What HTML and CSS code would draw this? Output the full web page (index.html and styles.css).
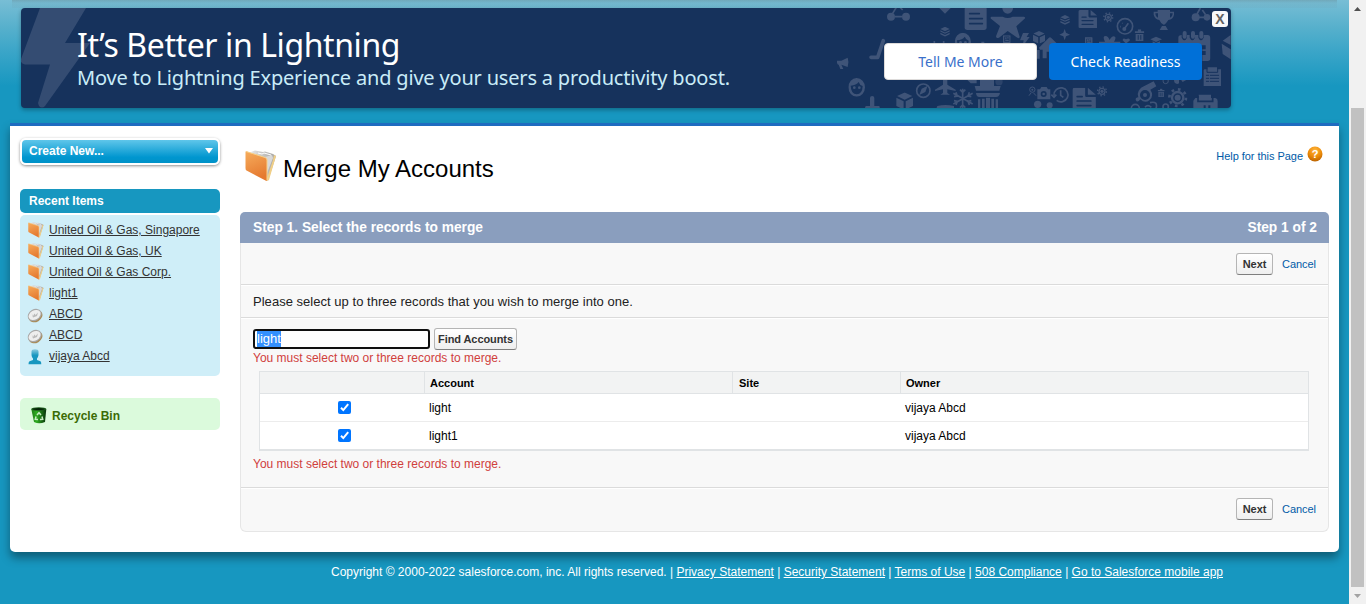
FILE: index.html
```html
<!DOCTYPE html>
<html lang="en">
<head>
<meta charset="utf-8">
<title>Merge My Accounts</title>
<link rel="stylesheet" href="styles.css">
</head>
<body>
<svg class="defs" width="0" height="0">
  <defs>
    <linearGradient id="orange" x1="0" y1="0" x2="0.3" y2="1"><stop offset="0" stop-color="#f6ac5c"/><stop offset="1" stop-color="#e57a30"/></linearGradient>
    <linearGradient id="paper" x1="0" y1="0" x2="1" y2="0"><stop offset="0" stop-color="#e4e4e4"/><stop offset="1" stop-color="#a5a4a1"/></linearGradient>
    <radialGradient id="help" cx="0.5" cy="0.25" r="0.8"><stop offset="0" stop-color="#ffb53c"/><stop offset="0.55" stop-color="#ec8b08"/><stop offset="1" stop-color="#b35c00"/></radialGradient>
    <linearGradient id="person" x1="0" y1="0" x2="0" y2="1"><stop offset="0" stop-color="#8ccbe0"/><stop offset="0.4" stop-color="#1797c0"/></linearGradient>
    <linearGradient id="bin" x1="0" y1="0" x2="1" y2="0"><stop offset="0" stop-color="#1f7a18"/><stop offset="0.35" stop-color="#2fae22"/><stop offset="1" stop-color="#07300a"/></linearGradient>
    <symbol id="folder" viewBox="0 0 32 32">
      <path d="M6 2 L10 0.500 L18 2 L20 1.500 L28 4 L31 6 L23 31 L20 28 Z" fill="url(#paper)"/>
      <path d="M20 7 L27 5 L28 8 L22 23 Z" fill="#d8d8d8"/>
      <path d="M29 5 L31 6 L24 30 L21 31 L28 10 Z" fill="#f1cf86"/>
      <path d="M13 3 L17 4 L19 3 L26 5" fill="none" stroke="#fff" stroke-width="1"/>
      <path d="M0.500 2 Q0.500 1 2 1.500 L20 7.500 Q22 8 22 10 L22 30 Q22 31.500 20.500 30.600 L1.500 20.500 Q0.500 20 0.500 18 Z" fill="url(#orange)"/>
      <path d="M1 1.500 L20 7.500 Q22 8 22 10 L22 30.500" fill="none" stroke="#f8d188" stroke-width="1"/>
    </symbol>
    <symbol id="coin" viewBox="0 0 16 16">
      <ellipse cx="8.500" cy="9.200" rx="7.300" ry="5.700" transform="rotate(-30 8.500 9.200)" fill="#a98b58"/>
      <ellipse cx="7.700" cy="8" rx="7.300" ry="5.700" transform="rotate(-30 7.700 8)" fill="#a8a8a8"/>
      <ellipse cx="7.600" cy="8" rx="6.300" ry="4.600" transform="rotate(-30 7.600 8)" fill="#eee"/>
      <path d="M4.500 6 L6 9 L7.500 6.500 L8.500 8 L11 5.500 L10 9 L6 10.500 Z" fill="#bbb"/>
    </symbol>
    <symbol id="user" viewBox="0 0 16 16">
      <path d="M4.500 2.500 Q4.500 0.300 8 0.300 Q11.500 0.300 11.500 2.500 V6 Q11 9 10 9.500 V11 L13.500 12.300 Q14.300 13 14.300 15.200 H1.500 Q1.500 13 2.500 12.300 L6 11 V9.500 Q4.700 8.500 4.500 6 Z" fill="url(#person)"/>
    </symbol>
    <symbol id="layers" viewBox="0 0 32 32"><path d="M16 0 L31 7 L16 14 L1 7Z M1 11 L16 18 L31 11 V15 L16 22 L1 15Z M1 19 L16 26 L31 19 V24 L16 31 L1 24Z"/></symbol>
    <symbol id="cube" viewBox="0 0 50 50"><path d="M25 0 L47 10 L25 21 L3 10Z M1 15 L22 25 V49 L1 39Z M49 15 L28 25 V49 L49 39Z"/></symbol>
    <symbol id="doc" viewBox="0 0 70 68"><path d="M6 0 H38 V24 Q38 28 42 28 H70 V68 H6 Q0 68 0 62 V6 Q0 0 6 0Z M46 0 L70 21 H46Z"/><path class="cut" d="M14 27 H29 M14 40 H55 M14 54 H55"/></symbol>
    <symbol id="gear" viewBox="0 0 60 60"><circle cx="30" cy="30" r="17" fill="none" stroke="currentColor" stroke-width="7"/><circle cx="30" cy="30" r="25" fill="none" stroke="currentColor" stroke-width="8" stroke-dasharray="8 11.630"/><circle cx="30" cy="30" r="9"/></symbol>
    <symbol id="trash" viewBox="0 0 30 36"><path d="M0 6 H10 V0 H20 V6 H30 V11 H0Z M3 14 H27 V36 H3Z"/><path class="cut thin" d="M11 19 V31 M19 19 V31"/></symbol>
    <symbol id="face" viewBox="0 0 50 56"><path fill-rule="evenodd" d="M25 0 A25 28 0 1 1 25 56 A25 28 0 1 1 25 0Z M7 23 Q24 22 31 12 Q34 22 43 24 Q42 48 25 49 Q8 48 7 23Z"/><circle cx="18" cy="29" r="4"/><circle cx="33" cy="29" r="4"/></symbol>
    <symbol id="card" viewBox="0 0 24 24"><path fill-rule="evenodd" d="M0 0 H24 V24 H0Z M4 4 V20 H20 V4Z"/><path d="M7 6 H11 V12 H7Z M13 6 H18 V10 H13Z M7 14 H18 V18 H7Z"/></symbol>
    <symbol id="calendar" viewBox="0 0 96 90"><path d="M0 20 Q0 12 10 12 V20 Q18 36 26 20 V12 H34 V20 Q42 36 50 20 V12 H60 V20 Q68 36 76 20 V12 H88 Q96 12 96 22 V82 Q96 90 88 90 H72 V72 H82 V60 H72 V55 H82 V43 H10 V90 H0Z"/><rect x="13" y="0" width="12" height="23" rx="6"/><rect x="38" y="0" width="12" height="23" rx="6"/><rect x="63" y="0" width="12" height="23" rx="6"/></symbol>
  </defs>
</svg>

<div class="window">
  <div class="page">
    <div class="top-shade"></div>
    <header class="banner">
      <svg class="banner-art" viewBox="21 8 1210 100" width="1210" height="100">
        <path class="bolt" d="M40 8 H86 L65 43 H90 L45 106 Q42 109 39 106 L38 103 L50 64.500 H25 Q20 64 21 59Z"/>
        <g class="glyphs">
          <g transform="translate(820 0) scale(.33333)">
            <circle cx="213" cy="50" r="12"/><circle cx="258" cy="50" r="12"/><path class="line" d="M225 50 H246 M218 40 L229 22 M240 22 L248 30"/>
            <path d="M358 24 H392 L375 41Z"/>
            <rect x="434" y="20" width="66" height="70" rx="8"/><path class="cut" d="M449 41 H478 M449 56 H487 M449 71 H487"/>
            <circle cx="563" cy="25" r="16"/><path d="M514 50 H548 Q563 58 578 50 H612 Q619 52 612 58 L589 79 L599 110 Q599 117 592 113 L563 93 L537 113 Q528 117 528 109 L540 78 L513 56 Q510 52 514 50Z"/>
            <use href="#layers" x="720" y="44" width="30" height="32"/><use href="#layers" x="360" y="80" width="30" height="31"/>
            <use href="#card" x="549" y="106" width="23" height="23"/><use href="#card" x="795" y="112" width="23" height="23"/>
            <path d="M609 99 H627 L620 111 H629 L607 140 L611 121 H600Z"/>
            <use href="#cube" x="638" y="91" width="38" height="42"/>
            <path d="M734 87 L738 98 L750 104 L738 109 L734 121 L730 109 L718 104 L730 98Z M721 91 L728 98 M747 91 L741 97"/>
            <path d="M657 143 L686 114 Q690 110 694 114 L727 146 Q727 149 718 149 V175 H700 V155 H680 V175 H668 V149 H660Z M651 150 H659 V176 H651Z"/>
            <use href="#face" x="404" y="98" width="49" height="56"/>
            <path class="wide" d="M153 172 H173 L190 122"/><path class="line" d="M343 123 V131 M371 123 V131 M484 128 H493"/>
            <path d="M51 182 H64 L83 173 Q88 187 83 201 L64 194 L70 207 H61 L56 194 Q50 193 51 182Z"/>
            <use href="#face" x="85" y="234" width="50" height="56"/>
            <path d="M150 294 Q150 288 156.500 288 Q163 288 163 294 V318 H178 L180 326 H134 L137 318 H150Z"/>
            <use href="#cube" x="228" y="277" width="52" height="53"/>
            <circle class="ring" cx="310" cy="272" r="20"/><path d="M298 285 L305 266 L323 257 L316 276Z"/>
            <path d="M369 237 H382 V254 L407 269 V273 L382 268 V279 L390 284 H361 L369 279 V268 L345 273 V269 L369 254Z M352 318 Q376 312 402 318 V326 H349Z"/>
            <path class="line" d="M428 266 V326 M400 280 L458 312 M400 312 L458 280 M420 269 L428 277 L436 269 M420 323 L428 315 L436 323 M402 290 L412 288 L408 277 M454 290 L444 288 L448 277 M402 302 L412 304 L408 315 M454 302 L444 304 L448 315"/>
            <path d="M440 238 H470 V250 H452Z M480 238 H522 V258 H542 L538 272 H468 L464 258 H480Z M468 279 H540 Q538 291 528 291 H478 Q469 291 468 279Z M474 298 H481 V326 H474Z M486 296 H494 V326 H486Z M498 293 H510 V326 H498Z M514 296 H522 V326 H514Z M527 298 H534 V326 H527Z"/>
            <circle cx="537" cy="245" r="11" opacity=".5"/>
            <circle class="slim" cx="637" cy="269" r="8"/><circle cx="637" cy="269" r="3"/><path class="slim" d="M633 279 L627 287 M641 279 L648 287"/>
            <path d="M652 268 H660 L664 261 H680 L684 268 H691 V298 H652Z"/><circle cx="671" cy="282" r="9" class="dark"/><circle cx="671" cy="282" r="4"/>
            <path class="line" d="M702 286 A21 21 0 1 1 710 301 M694 284 L702 292 L709 284 M722 271 V286 L730 292"/>
            <circle cx="653" cy="313" r="11"/><circle cx="689" cy="316" r="9"/>
          </g>
          <g transform="translate(1070 0) scale(.33333)">
            <use href="#doc" x="25" y="22" width="56" height="70"/>
            <use href="#gear" x="99" y="36" width="32" height="32"/>
            <circle class="ring" cx="165" cy="79" r="23"/><path class="line" d="M163 86 L175 70 M151 80 H153 M157 69 L158 70"/><circle cx="163" cy="87" r="6"/>
            <use href="#trash" x="194" y="88" width="29" height="35"/>
            <path fill-rule="evenodd" d="M263 30 H300 V35 H312 V44 Q309 59 295 60 Q286 74 281 74 Q272 70 268 60 Q255 58 251 44 V35 H263Z M256 40 Q257 51 264 53 V40Z M300 40 V53 Q307 51 308 40Z M276 78 H287 L294 90 H269Z"/>
            <circle cx="377" cy="52" r="12"/><circle cx="411" cy="52" r="10"/><path class="line" d="M387 52 H404 M381 42 L391 24 M397 30 L407 44"/>
            <use href="#card" x="45" y="112" width="22" height="22"/>
            <path d="M87 125 H105 Q96 108 107 108 Q114 108 119 120 Q126 106 135 110 Q139 113 132 125 H151 V145 H87Z"/>
            <path d="M168 131 L158 121 Q158 112 168 118 Q179 112 180 121Z"/>
            <path d="M258 110 L276 118 L258 126 L241 118Z M248 124 L258 129 L270 124 V132 H248Z"/>
            <use href="#calendar" x="324" y="93" width="98" height="90"/>
            <path d="M458 122 L482 105 V135Z M455 131 L482 148 V178 L458 162Z"/>
            <path d="M403 208 H413 V202 H441 V208 H453 V258 H401 V211Z"/><path class="cut thin" d="M411 207 V217 H443 V207 M409 226 H416 M421 226 H446 M409 235 H416 M421 235 H446 M409 244 H416 M421 244 H446"/>
            <use href="#doc" x="7" y="263" width="71" height="68"/>
            <use href="#gear" x="80" y="258" width="32" height="32"/>
            <path fill-rule="evenodd" d="M206 272 Q212 262 223 258 L251 244 L259 259 L241 269 Q253 287 239 300 Q225 312 211 298 Q202 310 197 300 Q196 292 205 292 Q201 281 206 272Z M225 270 A15 15 0 0 0 225 300 A15 15 0 0 0 225 270Z"/><circle cx="225" cy="285" r="6"/>
            <use href="#trash" x="263" y="265" width="21" height="27"/>
            <use href="#gear" x="293" y="263" width="60" height="60"/>
            <path d="M376 294 H386 V284 H423 V294 H436 Q443 296 443 303 V326 H370 V302Z"/><path class="cut" d="M384 289 V304 H428 V289"/><path class="dark" d="M401 316 H407 V326 H401Z M415 316 H421 V326 H415Z"/>
            <circle class="ring" cx="196" cy="325" r="12"/><path class="line" d="M225 322 Q233 312 244 322 M240 308 Q265 302 258 326"/>
            <circle class="ring" cx="287" cy="320" r="8"/><circle class="slim" cx="287" cy="243" r="8"/><path d="M312 240 H327 V250 Q320 255 313 247Z M333 239 H350 L338 246Z"/>
          </g>
        </g>
      </svg>
      <div class="banner-text">
        <div class="banner-title">It’s Better in Lightning</div>
        <div class="banner-sub">Move to Lightning Experience and give your users a productivity boost.</div>
      </div>
      <a class="cta cta-light">Tell Me More</a>
      <a class="cta cta-blue">Check Readiness</a>
      <span class="close">X</span>
    </header>

    <main class="panel">
      <aside class="sidebar">
        <div class="create"><span>Create New...</span><svg width="8" height="6" viewBox="0 0 8 6"><path d="M0 0 H8 L4 5.500Z" fill="#fff"/></svg></div>
        <h2 class="recent-head">Recent Items</h2>
        <ul class="recent">
          <li><svg class="mini"><use href="#folder"/></svg><a>United Oil &amp; Gas, Singapore</a></li>
          <li><svg class="mini"><use href="#folder"/></svg><a>United Oil &amp; Gas, UK</a></li>
          <li><svg class="mini"><use href="#folder"/></svg><a>United Oil &amp; Gas Corp.</a></li>
          <li><svg class="mini"><use href="#folder"/></svg><a>light1</a></li>
          <li><svg class="mini coin"><use href="#coin"/></svg><a>ABCD</a></li>
          <li><svg class="mini coin"><use href="#coin"/></svg><a>ABCD</a></li>
          <li><svg class="mini person"><use href="#user"/></svg><a>vijaya Abcd</a></li>
        </ul>
        <div class="recycle">
          <svg width="16" height="17" viewBox="0 0 16 17"><path d="M0.300 2 L15.300 2 L14 15 Q8 17.500 3 15Z" fill="url(#bin)"/><ellipse cx="7.800" cy="2" rx="7.500" ry="1.700" fill="#1c5b1c"/><ellipse cx="7.700" cy="2.100" rx="5.800" ry="1" fill="#052407"/><path d="M6 8 L8 5.700 L10 8 M11 9.500 L11.700 12.300 L9 12.500 M5 9.500 L4.300 12.300 L7 12.500" fill="none" stroke="#c8ebc4" stroke-width="1.500"/></svg>
          <span>Recycle Bin</span>
        </div>
      </aside>

      <section class="content">
        <div class="title-row">
          <svg class="title-icon"><use href="#folder"/></svg>
          <h1>Merge My Accounts</h1>
          <a class="help-link">Help for this Page</a>
          <span class="help-icon"><svg width="16" height="16" viewBox="0 0 16 16"><circle cx="8" cy="8" r="7.500" fill="url(#help)"/></svg><b>?</b></span>
        </div>
        <div class="step-head"><span>Step 1. Select the records to merge</span><span>Step 1 of 2</span></div>
        <div class="step-body">
          <div class="actions"><button class="btn next">Next</button><a>Cancel</a></div>
          <div class="intro">Please select up to three records that you wish to merge into one.</div>
          <div class="search">
            <div class="search-row">
              <div class="field"><span class="selected">light</span></div>
              <button class="btn find">Find Accounts</button>
            </div>
            <div class="error">You must select two or three records to merge.</div>
            <div class="table">
              <div class="row head"><div></div><div>Account</div><div>Site</div><div>Owner</div></div>
              <div class="row"><div class="check"><svg width="13" height="13" viewBox="0 0 13 13"><rect width="13" height="13" rx="2" fill="#0075ff"/><path d="M3 6.800 L5.300 9.100 L10.200 3.200" fill="none" stroke="#fff" stroke-width="2"/></svg></div><div>light</div><div></div><div>vijaya Abcd</div></div>
              <div class="row"><div class="check"><svg width="13" height="13" viewBox="0 0 13 13"><rect width="13" height="13" rx="2" fill="#0075ff"/><path d="M3 6.800 L5.300 9.100 L10.200 3.200" fill="none" stroke="#fff" stroke-width="2"/></svg></div><div>light1</div><div></div><div>vijaya Abcd</div></div>
            </div>
            <div class="error lower">You must select two or three records to merge.</div>
          </div>
          <div class="actions bottom"><button class="btn next">Next</button><a>Cancel</a></div>
        </div>
      </section>
    </main>
    <footer class="footer">Copyright © 2000-2022 salesforce.com, inc. All rights reserved. | <a>Privacy Statement</a> | <a>Security Statement</a> | <a>Terms of Use</a> | <a>508 Compliance</a> | <a>Go to Salesforce mobile app</a></footer>
  </div>
  <div class="scrollbar">
    <svg width="7" height="4" viewBox="0 0 7 4"><path d="M0 4 L3.500 0 L7 4Z" fill="#505050"/></svg>
    <div class="thumb"></div>
    <svg width="7" height="4" viewBox="0 0 7 4"><path d="M0 0 L3.500 4 L7 0Z" fill="#a3a3a3"/></svg>
  </div>
</div>
</body>
</html>
```
FILE: styles.css
```css
* { box-sizing: border-box; }
body { margin: 0; overflow: hidden; font: 12px/14px "Liberation Sans", Arial, sans-serif; color: #222; }
.defs { position: absolute; }
.window { display: flex; height: 604px; }
.page { position: relative; width: 1349px; display: flex; flex-direction: column; background: #1797c0 linear-gradient(#78bed5 0, #56b0cc 28px, #3aa5c8 52px, #1797c0 86px); }
.top-shade { position: absolute; left: 12px; top: 0; width: 1325px; height: 8px; background: linear-gradient(rgba(90, 100, 100, .24), rgba(100, 115, 115, .08) 3px, rgba(100, 115, 115, .05)); }

/* Banner */
.banner { position: relative; display: flex; width: 1210px; height: 100px; margin: 8px 0 0 21px; border-radius: 4px; background: #16325c; box-shadow: 0 2px 4px rgba(0, 0, 0, .3); font-family: "Noto Sans", "Open Sans", sans-serif; }
.banner-art { position: absolute; left: 0; top: 0; border-radius: 4px; }
.bolt { fill: #344c72; }
.glyphs { fill: #3f5478; color: #3f5478; }
.cut { fill: none; stroke: #16325c; stroke-width: 5; stroke-linecap: round; }
.thin { stroke-width: 3; }
.dark { fill: #16325c; }
.line, .wide, .ring, .slim { fill: none; stroke: #3f5478; stroke-width: 5; }
.wide { stroke-width: 11; stroke-linecap: round; stroke-linejoin: round; }
.slim { stroke-width: 3; }
.banner-text { position: relative; width: 807px; padding: 18px 0 0 56px; white-space: nowrap; }
.banner-title { color: #fff; font-size: 32px; line-height: 38px; letter-spacing: -.4px; }
.banner-sub { color: #c9ecf8; font-size: 20px; line-height: 28px; letter-spacing: -.185px; }
.cta { position: relative; width: 153px; height: 37px; margin: 35px 12px 0 0; border-radius: 4px; text-align: center; font-size: 14px; line-height: 37px; white-space: nowrap; }
.cta-light { margin-left: 56px; background: #fff; color: #3a70ca; border: 1px solid #dddbda; line-height: 35px; }
.cta-blue { background: #0070d8; color: #fff; }
.close { position: absolute; left: 1191px; top: 3px; width: 16px; height: 16px; border-radius: 3px; background: #f6f8fa; color: #626262; font: bold 14px/16px "Liberation Sans", Arial, sans-serif; text-align: center; }

/* Main panel */
.panel { display: flex; width: 1329px; height: 429px; margin: 15px 0 0 10px; padding-left: 10px; border-top: 3px solid #1f6cc0; border-radius: 0 0 5px 5px; background: #fff; box-shadow: 0 6px 10px rgba(0, 0, 0, .38); }
.sidebar { width: 200px; padding-top: 12px; }
.create { display: flex; align-items: center; justify-content: space-between; height: 27px; padding: 0 5px 2px 7px; border: 2px solid #fff; border-radius: 6px; background: linear-gradient(#5fc6ea, #0096cf 75%, #0092c8); box-shadow: 0 1px 3px rgba(0, 0, 0, .45); color: #fff; font-weight: bold; }
.recent-head { margin: 24px 0 0; height: 24px; padding-left: 9px; border-radius: 5px; background: #1797c0; color: #fff; font-size: 12px; line-height: 24px; }
.recent { list-style: none; margin: 2px 0 0; padding: 4px 0 0 8px; height: 161px; border-radius: 5px; background: #cfeef8; }
.recent li { display: flex; align-items: center; height: 21px; white-space: nowrap; }
.recent a { padding-top: 1px; color: #333; text-decoration: underline; }
.mini { width: 16px; height: 16px; margin: 1px 5px 0 0; flex: none; }
.coin { margin: 2px 6px 0 -1px; }
.person { margin: 2px 6px 0 -1px; }
.recycle { display: flex; align-items: center; height: 32px; margin-top: 22px; padding: 1px 0 0 11px; border-radius: 5px; background: #dbfadc; color: #3b6b06; font-weight: bold; gap: 5px; }
.recycle span { padding-top: 2px; }
.recycle svg { margin-top: 1px; }

.content { width: 1089px; margin-left: 20px; }
.title-row { display: flex; height: 86px; padding: 24px 6px 0 5px; }
.title-icon { width: 32px; height: 32px; }
h1 { margin: 3px 0 0 6px; font-size: 24px; line-height: 32px; font-weight: normal; color: #000; white-space: nowrap; }
.help-link { margin: -1px 4px 0 auto; color: #015ba7; font-size: 11px; letter-spacing: -.04px; }
.help-link, .actions a { white-space: nowrap; }
.help-icon { position: relative; width: 16px; height: 16px; margin-top: -4px; }
.help-icon svg { display: block; }
.help-icon b { position: absolute; left: 0; top: 1px; width: 16px; text-align: center; color: #fff; font-size: 11px; }
.step-head { display: flex; justify-content: space-between; height: 31px; padding: 0 12px 0 13px; border-radius: 5px 5px 0 0; background: #8a9ebe; color: #fff; font-size: 13.750px; font-weight: bold; line-height: 31px; }
.step-body { height: 289px; border: 1px solid #e6e6e6; border-top: 0; border-radius: 0 0 6px 6px; background: #f8f8f8; }
.actions { display: flex; align-items: center; justify-content: flex-end; gap: 9px; height: 42px; padding-right: 12px; border-bottom: 1px solid #dbdbdb; }
.actions a { color: #015ba7; font-size: 11px; letter-spacing: -.05px; }
.bottom { height: 41px; border-top: 1px solid #fff; border-bottom: 0; }
.btn { height: 22px; padding: 0; border: 1px solid #b5b5b5; border-bottom-color: #7f7f7f; border-radius: 3px; background: linear-gradient(#fff, #efefef); color: #333; font: bold 11px/18px "Liberation Sans", Arial, sans-serif; white-space: nowrap; }
.next { width: 37px; }
.find { width: 83px; letter-spacing: -.08px; }
.intro { height: 33px; padding-left: 12px; border-top: 1px solid #fff; border-bottom: 1px solid #dbdbdb; font-size: 13px; line-height: 32px; letter-spacing: .03px; white-space: nowrap; }
.search { height: 170px; padding: 9px 0 0 12px; border-top: 1px solid #fff; border-bottom: 1px solid #dbdbdb; }
.search-row { display: flex; align-items: center; gap: 4px; height: 22px; }
.field { width: 177px; height: 20px; padding: 0 2px; border: 2px solid #101010; border-radius: 3px; background: #fff; font-size: 13px; line-height: 15px; }
.selected { display: inline-block; height: 16px; background: #3390ff; color: #fff; line-height: 16px; }
.error { height: 21px; padding-top: 1px; color: #d0403c; font-size: 12px; }
.table { width: 1050px; margin-left: 6px; border: 1px solid #e0e3e5; border-bottom-width: 2px; background: #fff; color: #000; }
.row { display: grid; grid-template-columns: 164px 308px 168px 1fr; height: 28px; line-height: 28px; border-bottom: 1px solid #ececec; }
.row:last-child { border-bottom: 0; height: 27px; }
.row > div { padding-left: 4px; border-left: 1px solid transparent; }
.row > div:first-child { border: 0; }
.row.head { height: 22px; background: #f2f3f3; font-size: 11px; line-height: 22px; font-weight: bold; border-color: #e0e3e5; }
.row.head > div { padding-left: 5px; border-left-color: #e0e3e5; }
.row.head > div:nth-child(3) { padding-left: 6px; }
.row > .check { display: flex; align-items: flex-start; justify-content: center; padding: 7px 0 0 5px; }
.lower { padding-top: 6px; }
.footer { margin: 13px 0 0 331px; color: #fff; font-size: 12px; white-space: nowrap; }
.footer a { text-decoration: underline; }

/* Scrollbar */
.scrollbar { width: 17px; height: 604px; padding: 7px 0 6px; display: flex; flex-direction: column; align-items: center; background: #f1f1f1; }
.thumb { width: 13px; height: 479px; margin: 97px 0 auto; background: #c1c1c1; }
```
